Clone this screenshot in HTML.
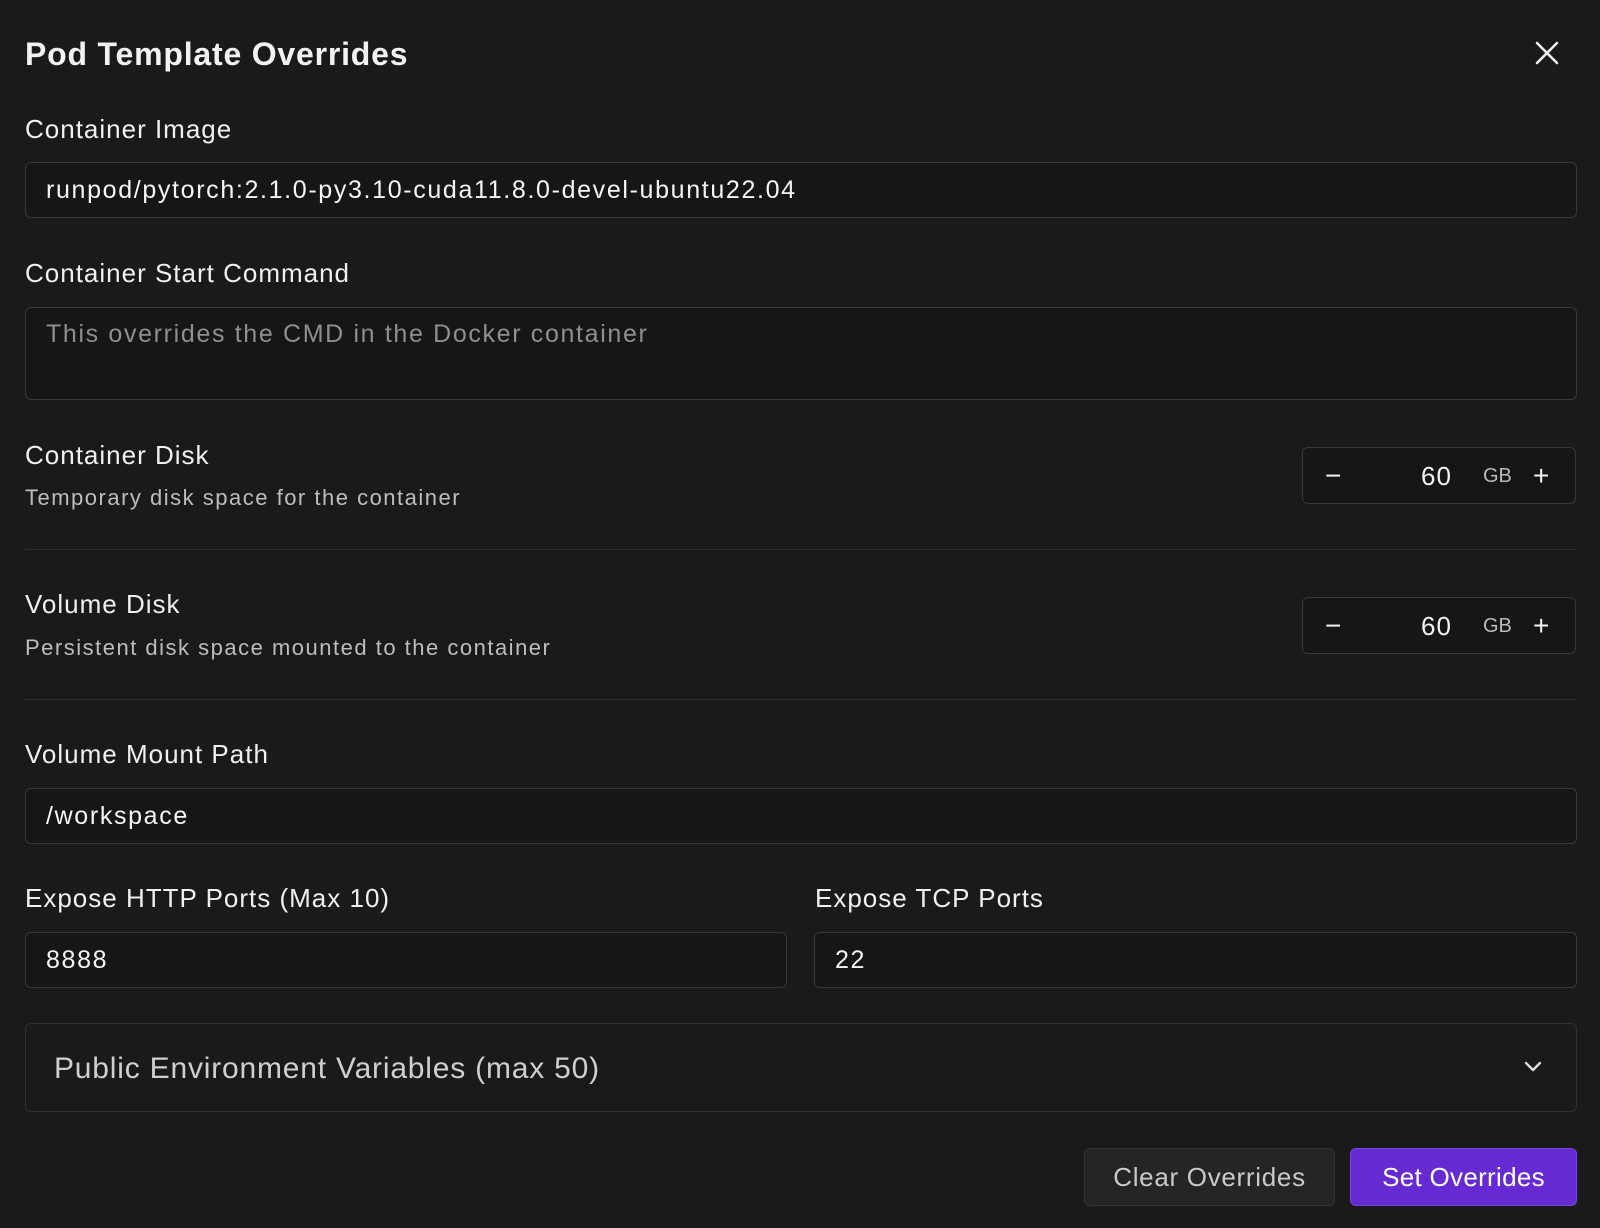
<!DOCTYPE html>
<html><head><meta charset="utf-8"><style>
*{box-sizing:border-box;margin:0;padding:0}
body{width:1600px;height:1228px;background:#1a1a1a;font-family:"Liberation Sans",sans-serif;color:#f2f2f2;position:relative;overflow:hidden}
.a{position:absolute}
.lbl{font-size:26px;color:#f0f0f0;line-height:30px;letter-spacing:1px}
.sub{font-size:22px;color:#bdbdbd;line-height:26px;letter-spacing:1.5px}
.in{position:absolute;border:1.5px solid #383838;border-radius:6px;background:#161616;font-size:25px;letter-spacing:1.65px;padding-left:20px;display:flex;align-items:center;color:#f5f5f5}
.hr{position:absolute;left:25px;width:1551px;height:1px;background:#2e2e2e}
.step{position:absolute;left:1302px;width:274px;height:57px;border:1.5px solid #383838;border-radius:6px;background:#161616}
.step span{position:absolute;top:14px;line-height:28px}
</style></head><body>
<div class="a" style="left:25px;top:35px;font-size:32px;letter-spacing:0.8px;font-weight:bold;line-height:38px">Pod Template Overrides</div>
<svg class="a" style="left:1535px;top:41px" width="24" height="24" viewBox="0 0 24 24"><path d="M2 2L22 22M22 2L2 22" stroke="#eee" stroke-width="2.6" stroke-linecap="round"/></svg>

<div class="a lbl" style="left:25px;top:114px">Container Image</div>
<div class="in" style="left:25px;top:162px;width:1552px;height:56px">runpod/pytorch:2.1.0-py3.10-cuda11.8.0-devel-ubuntu22.04</div>

<div class="a lbl" style="left:25px;top:258px">Container Start Command</div>
<div class="in" style="left:25px;top:307px;width:1552px;height:93px;align-items:flex-start;padding-top:12px;color:#8f8f8f">This overrides the CMD in the Docker container</div>

<div class="a lbl" style="left:25px;top:440px">Container Disk</div>
<div class="a sub" style="left:25px;top:485px">Temporary disk space for the container</div>
<div class="step" style="top:447px"><span style="left:22px;font-size:28px">−</span><span style="left:118px;font-size:26px;letter-spacing:1px">60</span><span style="left:180px;font-size:20px;color:#bbb">GB</span><span style="left:230px;font-size:28px">+</span></div>
<div class="hr" style="top:549px"></div>

<div class="a lbl" style="left:25px;top:589px">Volume Disk</div>
<div class="a sub" style="left:25px;top:635px">Persistent disk space mounted to the container</div>
<div class="step" style="top:597px"><span style="left:22px;font-size:28px">−</span><span style="left:118px;font-size:26px;letter-spacing:1px">60</span><span style="left:180px;font-size:20px;color:#bbb">GB</span><span style="left:230px;font-size:28px">+</span></div>
<div class="hr" style="top:699px"></div>

<div class="a lbl" style="left:25px;top:739px">Volume Mount Path</div>
<div class="in" style="left:25px;top:788px;width:1552px;height:56px">/workspace</div>

<div class="a lbl" style="left:25px;top:883px">Expose HTTP Ports (Max 10)</div>
<div class="a lbl" style="left:815px;top:883px">Expose TCP Ports</div>
<div class="in" style="left:25px;top:932px;width:762px;height:56px">8888</div>
<div class="in" style="left:814px;top:932px;width:763px;height:56px">22</div>

<div class="a" style="left:25px;top:1023px;width:1552px;height:89px;border:1.5px solid #303030;border-radius:6px;background:#1a1a1a"></div>
<div class="a" style="left:54px;top:1051px;font-size:30px;letter-spacing:0.8px;color:#cfcfcf;line-height:36px">Public Environment Variables (max 50)</div>
<svg class="a" style="left:1523px;top:1060px" width="20" height="14" viewBox="0 0 20 14"><path d="M3 3L10 10L17 3" stroke="#ddd" stroke-width="2.4" fill="none" stroke-linecap="round" stroke-linejoin="round"/></svg>

<div class="a" style="left:1084px;top:1148px;width:251px;height:58px;border:1.5px solid #333;border-radius:6px;background:#252525;color:#c9c9c9;font-size:26px;letter-spacing:0.7px;display:flex;align-items:center;justify-content:center">Clear Overrides</div>
<div class="a" style="left:1350px;top:1148px;width:227px;height:58px;border:1.5px solid #7a45e0;border-radius:6px;background:#652ad1;color:#fff;font-size:26px;letter-spacing:0.3px;display:flex;align-items:center;justify-content:center">Set Overrides</div>
</body></html>
